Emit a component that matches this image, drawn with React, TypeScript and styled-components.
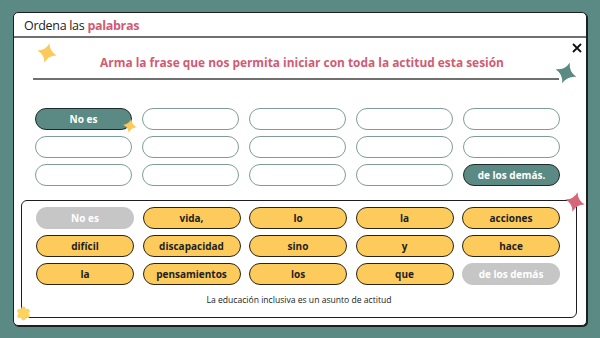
import React from 'react';
import styled, { createGlobalStyle } from 'styled-components';

const GlobalStyle = createGlobalStyle`
    html, body {
        margin: 0;
        padding: 0;
        background: #5b8a84;
    }
    * {
        box-sizing: border-box;
    }
`;

const Page = styled.div`
    width: 600px;
    height: 338px;
    padding: 12px 0 0 13px;
    font-family: 'Open Sans', 'Liberation Sans', sans-serif;
`;

const Card = styled.div`
    position: relative;
    width: 574px;
    height: 314px;
    background: #ffffff;
    border: 1.5px solid #1e1e1e;
    border-radius: 5px;
    box-shadow: 1px 1px 0 #1e1e1e;
    display: flex;
    flex-direction: column;
`;

const Header = styled.div`
    flex-shrink: 0;
    height: 25px;
    padding: 5px 0 0 10px;
    font-size: 12.5px;
    line-height: 16px;
    letter-spacing: -0.3px;
    color: #222222;
    border-bottom: 2.5px solid #707070;
`;

const Accent = styled.span`
    color: #d15b73;
    font-weight: 700;
`;

const Title = styled.h1`
    margin: 16.5px 0 0;
    padding-left: 4px;
    font-size: 11.9px;
    line-height: 14px;
    font-weight: 700;
    color: #d15b73;
    text-align: center;
`;

const Rule = styled.div`
    flex-shrink: 0;
    margin: 9px 27px 0 19px;
    height: 2px;
    background: #707070;
`;

const SlotGrid = styled.div`
    margin: 28px 0 0 21px;
    display: grid;
    grid-template-columns: repeat(5, 97px);
    grid-auto-rows: 22px;
    column-gap: 10px;
    row-gap: 6px;
`;

const Slot = styled.div<{ $filled?: boolean }>`
    border-radius: 11px;
    border: ${(p) => (p.$filled ? '1.2px solid #1e2a28' : '1px solid #7f9d98')};
    background: ${(p) => (p.$filled ? '#5a8a83' : '#ffffff')};
    color: #ffffff;
    font-size: 10px;
    font-weight: 700;
    display: flex;
    align-items: center;
    justify-content: center;
`;

const Bank = styled.div`
    flex-shrink: 0;
    margin: 14px 0 0 7px;
    width: 556px;
    height: 118px;
    border: 1.5px solid #1e1e1e;
    border-radius: 6px;
    padding: 6.5px 0 0 14px;
`;

const WordGrid = styled.div`
    display: grid;
    grid-template-columns: repeat(5, 98px);
    grid-auto-rows: 22px;
    column-gap: 8.5px;
    row-gap: 6px;
`;

const Word = styled.div<{ $used?: boolean }>`
    border-radius: 11px;
    border: ${(p) => (p.$used ? 'none' : '1.5px solid #2a2416')};
    background: ${(p) => (p.$used ? '#c6c6c6' : '#fdcb5b')};
    color: ${(p) => (p.$used ? '#ffffff' : '#1e1e1e')};
    font-size: 10px;
    font-weight: 700;
    display: flex;
    align-items: center;
    justify-content: center;
`;

const Caption = styled.div`
    margin-top: 10px;
    padding-right: 14px;
    font-size: 8.6px;
    line-height: 10px;
    color: #222222;
    text-align: center;
`;

const Deco = styled.svg<{ $x: number; $y: number; $s: number; $r?: number }>`
    position: absolute;
    left: ${(p) => p.$x - p.$s / 2}px;
    top: ${(p) => p.$y - p.$s / 2}px;
    width: ${(p) => p.$s}px;
    height: ${(p) => p.$s}px;
    transform: rotate(${(p) => p.$r ?? 0}deg);
    overflow: visible;
`;

const Overlay = styled.div`
    position: absolute;
    inset: 0;
    pointer-events: none;
`;

const starPath = 'M50 0 Q60 40 100 50 Q60 60 50 100 Q40 60 0 50 Q40 40 50 0Z';

const Star: React.FC<{ x: number; y: number; s: number; r?: number; color: string }> = ({ x, y, s, r, color }) => (
    <Deco $x={x} $y={y} $s={s} $r={r} viewBox="0 0 100 100">
        <path d={starPath} fill={color} />
    </Deco>
);

const Flower: React.FC<{ x: number; y: number; s: number }> = ({ x, y, s }) => (
    <Deco $x={x} $y={y} $s={s} viewBox="0 0 100 100">
        {[0, 60, 120].map((a) => (
            <rect key={a} x="34" y="4" width="32" height="92" rx="16" fill="#fcd35e" transform={`rotate(${a} 50 50)`} />
        ))}
    </Deco>
);

const slots: string[] = [
    'No es', '', '', '', '',
    '', '', '', '', '',
    '', '', '', '', 'de los demás.',
];

const words: { text: string; used?: boolean }[] = [
    { text: 'No es', used: true },
    { text: 'vida,' },
    { text: 'lo' },
    { text: 'la' },
    { text: 'acciones' },
    { text: 'difícil' },
    { text: 'discapacidad' },
    { text: 'sino' },
    { text: 'y' },
    { text: 'hace' },
    { text: 'la' },
    { text: 'pensamientos' },
    { text: 'los' },
    { text: 'que' },
    { text: 'de los demás', used: true },
];

const App: React.FC = () => {
    return (
        <Page>
            <GlobalStyle />
            <Card>
                <Header>
                    Ordena las <Accent>palabras</Accent>
                </Header>
                <Title>Arma la frase que nos permita iniciar con toda la actitud esta sesión</Title>
                <Rule />
                <SlotGrid>
                    {slots.map((s, i) => (
                        <Slot key={i} $filled={s !== ''}>
                            {s}
                        </Slot>
                    ))}
                </SlotGrid>
                <Bank>
                    <WordGrid>
                        {words.map((w, i) => (
                            <Word key={i} $used={w.used}>
                                {w.text}
                            </Word>
                        ))}
                    </WordGrid>
                    <Caption>La educación inclusiva es un asunto de actitud</Caption>
                </Bank>
                <Overlay>
                    <Deco $x={563} $y={35} $s={10} viewBox="0 0 10 10">
                        <path d="M1 1 L9 9 M9 1 L1 9" stroke="#111" strokeWidth="1.8" />
                    </Deco>
                    <Star x={33} y={40} s={20} r={15} color="#fdc95a" />
                    <Star x={552} y={60} s={22} r={20} color="#5a8a83" />
                    <Star x={116} y={113} s={14} r={10} color="#fdc95a" />
                    <Star x={561} y={189} s={20} r={15} color="#d6667a" />
                    <Flower x={9} y={300} s={15} />
                </Overlay>
            </Card>
        </Page>
    );
};

export default App;
